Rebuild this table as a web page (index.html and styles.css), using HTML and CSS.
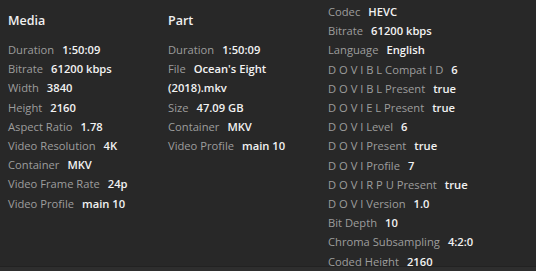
FILE: index.html
```html
<!DOCTYPE html>
<html>
<head>
<meta charset="utf-8">
<link rel="stylesheet" href="styles.css">
</head>
<body>
<div class="details">
  <section class="col col-media">
    <h2 class="col-title">Media</h2>
    <div class="row"><span class="k">Duration</span><span class="v">1:50:09</span></div>
    <div class="row"><span class="k">Bitrate</span><span class="v">61200 kbps</span></div>
    <div class="row"><span class="k">Width</span><span class="v">3840</span></div>
    <div class="row"><span class="k">Height</span><span class="v">2160</span></div>
    <div class="row"><span class="k">Aspect Ratio</span><span class="v">1.78</span></div>
    <div class="row"><span class="k">Video Resolution</span><span class="v">4K</span></div>
    <div class="row"><span class="k">Container</span><span class="v">MKV</span></div>
    <div class="row"><span class="k">Video Frame Rate</span><span class="v">24p</span></div>
    <div class="row"><span class="k">Video Profile</span><span class="v">main 10</span></div>
  </section>
  <section class="col col-part">
    <h2 class="col-title">Part</h2>
    <div class="row"><span class="k">Duration</span><span class="v">1:50:09</span></div>
    <div class="row"><span class="k">File</span><span class="v">Ocean's Eight (2018).mkv</span></div>
    <div class="row"><span class="k">Size</span><span class="v">47.09 GB</span></div>
    <div class="row"><span class="k">Container</span><span class="v">MKV</span></div>
    <div class="row"><span class="k">Video Profile</span><span class="v">main 10</span></div>
  </section>
  <section class="col col-stream">
    <div class="row"><span class="k">Codec</span><span class="v">HEVC</span></div>
    <div class="row"><span class="k">Bitrate</span><span class="v">61200 kbps</span></div>
    <div class="row"><span class="k">Language</span><span class="v">English</span></div>
    <div class="row"><span class="k">D O V I B L Compat I D</span><span class="v">6</span></div>
    <div class="row"><span class="k">D O V I B L Present</span><span class="v">true</span></div>
    <div class="row"><span class="k">D O V I E L Present</span><span class="v">true</span></div>
    <div class="row"><span class="k">D O V I Level</span><span class="v">6</span></div>
    <div class="row"><span class="k">D O V I Present</span><span class="v">true</span></div>
    <div class="row"><span class="k">D O V I Profile</span><span class="v">7</span></div>
    <div class="row"><span class="k">D O V I R P U Present</span><span class="v">true</span></div>
    <div class="row"><span class="k">D O V I Version</span><span class="v">1.0</span></div>
    <div class="row"><span class="k">Bit Depth</span><span class="v">10</span></div>
    <div class="row"><span class="k">Chroma Subsampling</span><span class="v">4:2:0</span></div>
    <div class="row"><span class="k">Coded Height</span><span class="v">2160</span></div>
  </section>
</div>
<div class="footer"></div>
</body>
</html>
```

FILE: styles.css
```css
html, body {
  margin: 0;
  height: 100%;
}

body {
  background: #282828;
  color: #eeeeee;
  font-family: "Open Sans", "Noto Sans", sans-serif;
  font-size: 11.2px;
  line-height: 19.2px;
  overflow: hidden;
  position: relative;
}

.details {
  display: grid;
  grid-template-columns: 160px 160px 1fr;
  padding: 0 8px;
}

.col-media,
.col-part {
  padding-top: 11px;
}

.col-stream {
  padding-top: 2px;
}

.col-title {
  margin: 0 0 9px;
  font-size: 12.5px;
  line-height: 20px;
  font-weight: 600;
  color: #f0f0f0;
}

.row {
  padding-right: 8px;
}

.k {
  color: #9d9d9d;
  margin-right: 8px;
}

.v {
  color: #f2f2f2;
  font-weight: 600;
}

.footer {
  position: absolute;
  left: 0;
  right: 0;
  bottom: 0;
  height: 4px;
  background: #2e2e2e;
  border-top: 1px solid #222222;
}
```
